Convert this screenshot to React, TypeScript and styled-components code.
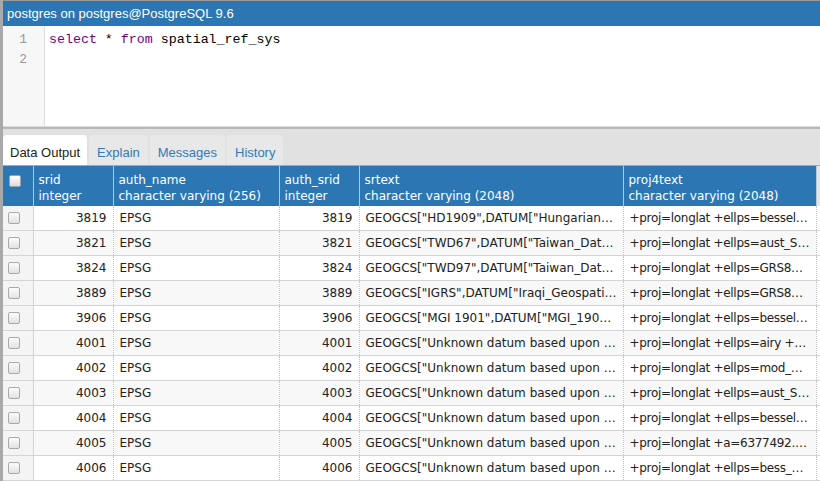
import React from 'react';
import styled, { createGlobalStyle } from 'styled-components';

const GlobalStyle = createGlobalStyle`
    html, body {
        margin: 0;
        padding: 0;
        overflow: hidden;
        background: #ffffff;
    }
`;

interface IRow {
    srid: number;
    auth: string;
    srtext: string;
    proj: string;
}

const rows: IRow[] = [
    {srid: 3819, auth: 'EPSG', srtext: 'GEOGCS["HD1909",DATUM["Hungarian_Datum_1909"]]', proj: '+proj=longlat +ellps=bessel +towgs84=595.48'},
    {srid: 3821, auth: 'EPSG', srtext: 'GEOGCS["TWD67",DATUM["Taiwan_Datum_1967"]]', proj: '+proj=longlat +ellps=aust_SA +no_defs'},
    {srid: 3824, auth: 'EPSG', srtext: 'GEOGCS["TWD97",DATUM["Taiwan_Datum_1997"]]', proj: '+proj=longlat +ellps=GRS80 +towgs84=0,0,0'},
    {srid: 3889, auth: 'EPSG', srtext: 'GEOGCS["IGRS",DATUM["Iraqi_Geospatial_Reference_System"]]', proj: '+proj=longlat +ellps=GRS80 +towgs84=0,0,0'},
    {srid: 3906, auth: 'EPSG', srtext: 'GEOGCS["MGI 1901",DATUM["MGI_1901"]]', proj: '+proj=longlat +ellps=bessel +towgs84=682'},
    {srid: 4001, auth: 'EPSG', srtext: 'GEOGCS["Unknown datum based upon the Airy 1830 ellipsoid"]', proj: '+proj=longlat +ellps=airy +no_defs'},
    {srid: 4002, auth: 'EPSG', srtext: 'GEOGCS["Unknown datum based upon the Airy Modified 1849 ellipsoid"]', proj: '+proj=longlat +ellps=mod_airy +no_defs'},
    {srid: 4003, auth: 'EPSG', srtext: 'GEOGCS["Unknown datum based upon the Australian National Spheroid"]', proj: '+proj=longlat +ellps=aust_SA +no_defs'},
    {srid: 4004, auth: 'EPSG', srtext: 'GEOGCS["Unknown datum based upon the Bessel 1841 ellipsoid"]', proj: '+proj=longlat +ellps=bessel +no_defs'},
    {srid: 4005, auth: 'EPSG', srtext: 'GEOGCS["Unknown datum based upon the Bessel Modified ellipsoid"]', proj: '+proj=longlat +a=6377492.018 +b=6356173.508712696 +no_defs'},
    {srid: 4006, auth: 'EPSG', srtext: 'GEOGCS["Unknown datum based upon the Bessel Namibia ellipsoid"]', proj: '+proj=longlat +ellps=bess_nam +no_defs'},
];

const columns = [
    {name: 'srid', type: 'integer', width: 80},
    {name: 'auth_name', type: 'character varying (256)', width: 166},
    {name: 'auth_srid', type: 'integer', width: 80},
    {name: 'srtext', type: 'character varying (2048)', width: 264},
    {name: 'proj4text', type: 'character varying (2048)', width: 193},
];

const tabs = ['Data Output', 'Explain', 'Messages', 'History'];

export default function App() {
    return (
        <>
            <GlobalStyle />
            <Panel>
                <TitleBar>postgres on postgres@PostgreSQL 9.6</TitleBar>
                <Editor>
                    <Gutter>
                        <LineNo>1</LineNo>
                        <LineNo>2</LineNo>
                    </Gutter>
                    <Code>
                        <CodeLine>
                            <Keyword>select</Keyword> * <Keyword>from</Keyword> spatial_ref_sys
                        </CodeLine>
                        <CodeLine>&nbsp;</CodeLine>
                    </Code>
                </Editor>
                <Splitter />
                <TabBar>
                    {tabs.map((t, i) => (
                        <Tab key={t} active={i === 0}>{t}</Tab>
                    ))}
                </TabBar>
                <GridWrap>
                    <Grid>
                        <colgroup>
                            <col style={{width: 30}} />
                            {columns.map((c) => <col key={c.name} style={{width: c.width}} />)}
                            <col />
                        </colgroup>
                        <thead>
                            <tr>
                                <HeadCheckCell><Check header /></HeadCheckCell>
                                {columns.map((c) => (
                                    <HeadCell key={c.name}>
                                        <HeadName>{c.name}</HeadName>
                                        <HeadName>{c.type}</HeadName>
                                    </HeadCell>
                                ))}
                                <FillerHead />
                            </tr>
                        </thead>
                        <tbody>
                            {rows.map((r, i) => (
                                <Row key={r.srid} odd={i % 2 === 1}>
                                    <CheckCell><Check /></CheckCell>
                                    <Cell align="right">{r.srid}</Cell>
                                    <Cell>{r.auth}</Cell>
                                    <Cell align="right">{r.srid}</Cell>
                                    <Cell>{r.srtext}</Cell>
                                    <Cell tight>{r.proj}</Cell>
                                    <Filler />
                                </Row>
                            ))}
                        </tbody>
                    </Grid>
                </GridWrap>
            </Panel>
        </>
    );
}

const Panel = styled.div`
    width: 820px;
    height: 481px;
    box-sizing: border-box;
    border-left: 3px solid #a9a9a9;
    display: flex;
    flex-direction: column;
    overflow: hidden;
    background: #ffffff;
`;

const TitleBar = styled.div`
    height: 25px;
    line-height: 25px;
    border-top: 1px solid #9a9a9a;
    margin-left: -3px;
    padding-left: 7px;
    background: #2c76b4;
    color: #ffffff;
    font-family: "Liberation Sans", Arial, sans-serif;
    font-size: 13px;
    flex-shrink: 0;
`;

const Editor = styled.div`
    height: 100px;
    display: flex;
    flex-shrink: 0;
`;

const Gutter = styled.div`
    width: 42px;
    box-sizing: border-box;
    background: #f7f7f7;
    border-right: 1px solid #dddddd;
    padding: 4px 17px 0 0;
    text-align: right;
`;

const LineNo = styled.div`
    height: 20px;
    line-height: 20px;
    color: #999999;
    font-family: "Liberation Mono", "Courier New", monospace;
    font-size: 13px;
`;

const Code = styled.div`
    flex: 1;
    padding: 4px 0 0 4px;
`;

const CodeLine = styled.div`
    height: 20px;
    line-height: 20px;
    color: #000000;
    font-family: "Liberation Mono", "Courier New", monospace;
    font-size: 13.3px;
    white-space: pre;
`;

const Keyword = styled.span`
    color: #770088;
`;

const Splitter = styled.div`
    height: 3px;
    flex-shrink: 0;
    border-top: 1px solid #dcdcdc;
    border-bottom: 2px solid #b8b8b8;
    box-sizing: border-box;
`;

const TabBar = styled.div`
    height: 37px;
    flex-shrink: 0;
    box-sizing: border-box;
    background: #e1e1e1;
    display: flex;
    align-items: flex-end;
    gap: 2px;
    border-bottom: 1px solid #a8a8a8;
`;

const Tab = styled.div<{active: boolean}>`
    height: 30px;
    line-height: 35px;
    padding: 0 ${({ active }) => active ? '7px' : '8px'};
    border-radius: 4px 4px 0 0;
    background: ${({ active }) => active ? '#ffffff' : '#e8e8e8'};
    color: ${({ active }) => active ? '#222222' : '#337ab7'};
    font-family: "Liberation Sans", Arial, sans-serif;
    font-size: 13px;
`;

const GridWrap = styled.div`
    flex: 1;
    overflow: hidden;
`;

const Grid = styled.table`
    width: 817px;
    table-layout: fixed;
    border-collapse: collapse;
    border-spacing: 0;
`;

const HeadCell = styled.th`
    height: 40px;
    box-sizing: border-box;
    padding: 3px 5px 0 5px;
    background: #2c76b4;
    border-right: 1px solid #b4c8dc;
    color: #ffffff;
    text-align: left;
    vertical-align: middle;
    font-family: "DejaVu Sans", Verdana, sans-serif;
    font-size: 12px;
    font-weight: normal;
    white-space: nowrap;
    overflow: hidden;
`;

const HeadCheckCell = styled(HeadCell)`
    padding: 9px 0 0 6px;
    vertical-align: top;
`;

const FillerHead = styled.th`
    background: #e6e6e6;
    padding: 0;
`;

const HeadName = styled.div`
    line-height: 16px;
`;

const Row = styled.tr<{odd: boolean}>`
    background: ${({ odd }) => odd ? '#f8f8f8' : '#ffffff'};
    border-bottom: 1px solid #d4d4d4;
`;

const Cell = styled.td<{align?: string, tight?: boolean}>`
    height: 24px;
    padding: 0 6px;
    line-height: 20px;
    border-right: 1px dotted #c4c4c4;
    text-align: ${({ align }) => align || 'left'};
    color: #222222;
    font-family: "DejaVu Sans", Verdana, sans-serif;
    font-size: 12px;
    letter-spacing: ${({ tight }) => tight ? '-0.3px' : '0'};
    white-space: nowrap;
    overflow: hidden;
    text-overflow: ellipsis;
`;

const CheckCell = styled.td`
    height: 24px;
    padding: 0 0 0 5px;
    border-right: 1px solid #d4d4d4;
    background: #f4f4f4;
`;

const Filler = styled.td`
    padding: 0;
    background: #ffffff;
`;

const Check = styled.span<{header?: boolean}>`
    display: block;
    width: 12px;
    height: 12px;
    box-sizing: border-box;
    border: 1px solid ${({ header }) => header ? '#9aa4ae' : '#a9a9a9'};
    border-radius: 2px;
    background: ${({ header }) => header
        ? 'linear-gradient(#ffffff, #dcdcdc)'
        : 'linear-gradient(#fcfcfc, #e2e2e2)'};
`;
